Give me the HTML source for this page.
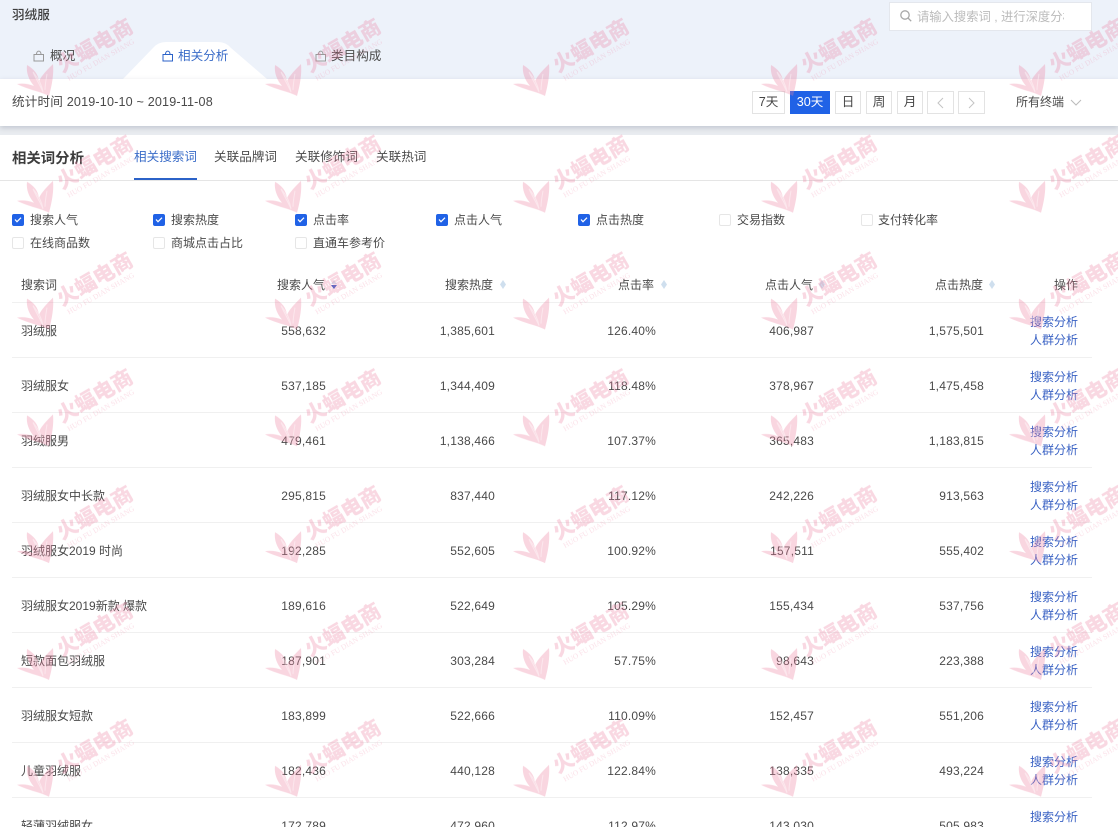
<!DOCTYPE html>
<html lang="zh-CN"><head><meta charset="utf-8"><title>相关词分析</title>
<style>
*{box-sizing:border-box}
html,body{margin:0;padding:0;width:1118px;height:827px;overflow:hidden;background:#fff}
#wrap{position:relative;width:1118px;height:827px;overflow:hidden;background:#fff;font:12px/16px "Liberation Sans","Noto Sans CJK SC",sans-serif;color:#444}
.a{position:absolute;white-space:nowrap}
.btn{position:absolute;top:91px;height:23px;border:1px solid #e3e3e3;background:#fff;text-align:center;line-height:21px;color:#444;font-size:12.600px}
.cb{position:absolute;width:12px;height:12px;border:1px solid #e6e6e6;border-radius:2px;background:#fff}
.cb.on{background:#2062e6;border-color:#2062e6}
.cb.on svg{position:absolute;left:0;top:0}
.lb{position:absolute;white-space:nowrap;color:#4a4a4a}
.row{position:absolute;left:12px;width:1080px;height:55px;border-bottom:1px solid #f0f0f0}
.row span{position:absolute;top:20px;white-space:nowrap;color:#4a4a4a;letter-spacing:.2px}
.row .n{left:9px;letter-spacing:0}
.row .c1,.row .c2,.row .c3,.row .c4,.row .c5{text-align:right;width:100px}
.c1{left:214px}.c2{left:383px}.c3{left:544px}.c4{left:702px}.c5{left:872px}
.row .o1,.row .o2{left:1018px;color:#3a62c4;letter-spacing:0}
.row .o1{top:11px}.row .o2{top:29px}
.th{position:absolute;top:277px;white-space:nowrap;color:#4a4a4a}
.s{position:absolute;top:280px}
.t{position:absolute;white-space:nowrap;font-size:12.600px}
</style></head><body><div id="wrap">
<div class="a" style="left:0;top:0;width:1118px;height:79px;background:#edf2fa"></div>
<div class="a" style="left:12px;top:7px;color:#3d3d3d;font-size:12.600px;font-weight:500">羽绒服</div>
<div class="a" style="left:889px;top:2px;width:203px;height:29px;background:#fff;border:1px solid #e4e7ed"></div>
<svg class="a" style="left:899px;top:9px" width="14" height="14" viewBox="0 0 14 14" fill="none" stroke="#a8a8a8" stroke-width="1.3"><circle cx="6" cy="6" r="4.2"/><path d="M9 9l3.2 3.2"/></svg>
<div class="a" style="left:917px;top:9px;width:147px;overflow:hidden;color:#bbb;font-size:12.300px">请输入搜索词 , 进行深度分析</div>

<svg class="a" style="left:120px;top:40px" width="150" height="40"><path d="M3 39 L33 8 Q38 2 46 2 L98 2 Q106 2 111 8 L147 39 Z" fill="#fff"/></svg>
<svg class="a" style="left:33px;top:50px" width="12" height="12" fill="none" stroke="#999" stroke-width="1"><path d="M1 4.500h9.500v6.500h-9.500zM3.500 4.500C3.500 0 8 0 8 4.500"/></svg>
<div class="t" style="left:50px;top:48px;color:#4a4a4a">概况</div>
<svg class="a" style="left:162px;top:50px" width="12" height="12" fill="none" stroke="#2b62c8" stroke-width="1"><path d="M1 4.500h9.500v6.500h-9.500zM3.500 4.500C3.500 0 8 0 8 4.500"/></svg>
<div class="t" style="left:178px;top:48px;color:#3a6cc8">相关分析</div>
<svg class="a" style="left:315px;top:50px" width="12" height="12" fill="none" stroke="#999" stroke-width="1"><path d="M1 4.500h9.500v6.500h-9.500zM3.500 4.500C3.500 0 8 0 8 4.500"/></svg>
<div class="t" style="left:331px;top:48px;color:#4a4a4a">类目构成</div>

<div class="a" style="left:0;top:126px;width:1118px;height:9px;background:#e9ecf0"></div>
<div class="a" style="left:0;top:79px;width:1118px;height:47px;background:#fff;box-shadow:0 2px 5px rgba(120,130,150,.35)"></div>
<div class="a" style="left:0;top:135px;width:1118px;height:692px;background:#fff"></div>
<div class="t" style="left:12px;top:94px;color:#4a4a4a;letter-spacing:.17px">统计时间 2019-10-10 ~ 2019-11-08</div>
<div class="btn" style="left:752px;width:33px">7天</div>
<div class="btn" style="left:790px;width:40px;background:#2062e6;border-color:#2062e6;color:#fff">30天</div>
<div class="btn" style="left:835px;width:26px">日</div>
<div class="btn" style="left:866px;width:26px">周</div>
<div class="btn" style="left:897px;width:26px">月</div>
<div class="btn" style="left:927px;width:27px"></div>
<div class="btn" style="left:958px;width:27px"></div>
<svg class="a" style="left:936px;top:97px" width="10" height="12" fill="none" stroke="#c4c4c4" stroke-width="1"><path d="M7 1L2 6l5 5"/></svg>
<svg class="a" style="left:967px;top:97px" width="10" height="12" fill="none" stroke="#c4c4c4" stroke-width="1"><path d="M2 1l5 5-5 5"/></svg>
<div class="a" style="left:1016px;top:94px;color:#4a4a4a">所有终端</div>
<svg class="a" style="left:1070px;top:99px" width="12" height="8" fill="none" stroke="#bbb" stroke-width="1"><path d="M1 1l5 5 5-5"/></svg>

<div class="a" style="left:12px;top:151px;font-size:14.400px;font-weight:700;color:#3d3d3d">相关词分析</div>
<div class="t" style="left:134px;top:149px;color:#3a6cc8">相关搜索词</div>
<div class="t" style="left:214px;top:149px;color:#4a4a4a">关联品牌词</div>
<div class="t" style="left:295px;top:149px;color:#4a4a4a">关联修饰词</div>
<div class="t" style="left:376px;top:149px;color:#4a4a4a">关联热词</div>
<div class="a" style="left:0;top:180px;width:1118px;height:1px;background:#e5e5e5"></div>
<div class="a" style="left:134px;top:178px;width:63px;height:2px;background:#2b62c8"></div>

<div class="cb on" style="left:12px;top:214px"><svg width="10" height="10" fill="none" stroke="#fff" stroke-width="1.200"><path d="M2 4.500l2 2.200 4-4"/></svg></div><div class="lb" style="left:30px;top:212px">搜索人气</div>
<div class="cb on" style="left:153px;top:214px"><svg width="10" height="10" fill="none" stroke="#fff" stroke-width="1.200"><path d="M2 4.500l2 2.200 4-4"/></svg></div><div class="lb" style="left:171px;top:212px">搜索热度</div>
<div class="cb on" style="left:295px;top:214px"><svg width="10" height="10" fill="none" stroke="#fff" stroke-width="1.200"><path d="M2 4.500l2 2.200 4-4"/></svg></div><div class="lb" style="left:313px;top:212px">点击率</div>
<div class="cb on" style="left:436px;top:214px"><svg width="10" height="10" fill="none" stroke="#fff" stroke-width="1.200"><path d="M2 4.500l2 2.200 4-4"/></svg></div><div class="lb" style="left:454px;top:212px">点击人气</div>
<div class="cb on" style="left:578px;top:214px"><svg width="10" height="10" fill="none" stroke="#fff" stroke-width="1.200"><path d="M2 4.500l2 2.200 4-4"/></svg></div><div class="lb" style="left:596px;top:212px">点击热度</div>
<div class="cb" style="left:719px;top:214px"></div><div class="lb" style="left:737px;top:212px">交易指数</div>
<div class="cb" style="left:861px;top:214px"></div><div class="lb" style="left:878px;top:212px">支付转化率</div>
<div class="cb" style="left:12px;top:237px"></div><div class="lb" style="left:30px;top:235px">在线商品数</div>
<div class="cb" style="left:153px;top:237px"></div><div class="lb" style="left:171px;top:235px">商城点击占比</div>
<div class="cb" style="left:295px;top:237px"></div><div class="lb" style="left:313px;top:235px">直通车参考价</div>

<div class="th" style="left:21px">搜索词</div>
<div class="th" style="left:277px">搜索人气</div>
<div class="th" style="left:445px">搜索热度</div>
<div class="th" style="left:618px">点击率</div>
<div class="th" style="left:765px">点击人气</div>
<div class="th" style="left:935px">点击热度</div>
<div class="th" style="left:1054px">操作</div>
<svg class="s" style="left:330px" width="8" height="10"><path d="M4 0L7 4H1z" fill="#d5e2ef"/><path d="M4 9L7 5H1z" fill="#3a5fc8"/></svg>
<svg class="s" style="left:499px" width="8" height="10"><path d="M4 0L7 4.500 4 9 1 4.500z" fill="#cfdfee"/></svg>
<svg class="s" style="left:660px" width="8" height="10"><path d="M4 0L7 4.500 4 9 1 4.500z" fill="#cfdfee"/></svg>
<svg class="s" style="left:818px" width="8" height="10"><path d="M4 0L7 4.500 4 9 1 4.500z" fill="#cfdfee"/></svg>
<svg class="s" style="left:988px" width="8" height="10"><path d="M4 0L7 4.500 4 9 1 4.500z" fill="#cfdfee"/></svg>
<div class="a" style="left:12px;top:302px;width:1080px;height:1px;background:#f0f0f0"></div>

<div class="row" style="top:303px"><span class="n">羽绒服</span><span class="c1">558,632</span><span class="c2">1,385,601</span><span class="c3">126.40%</span><span class="c4">406,987</span><span class="c5">1,575,501</span><span class="o1">搜索分析</span><span class="o2">人群分析</span></div>
<div class="row" style="top:358px"><span class="n">羽绒服女</span><span class="c1">537,185</span><span class="c2">1,344,409</span><span class="c3">118.48%</span><span class="c4">378,967</span><span class="c5">1,475,458</span><span class="o1">搜索分析</span><span class="o2">人群分析</span></div>
<div class="row" style="top:413px"><span class="n">羽绒服男</span><span class="c1">479,461</span><span class="c2">1,138,466</span><span class="c3">107.37%</span><span class="c4">365,483</span><span class="c5">1,183,815</span><span class="o1">搜索分析</span><span class="o2">人群分析</span></div>
<div class="row" style="top:468px"><span class="n">羽绒服女中长款</span><span class="c1">295,815</span><span class="c2">837,440</span><span class="c3">117.12%</span><span class="c4">242,226</span><span class="c5">913,563</span><span class="o1">搜索分析</span><span class="o2">人群分析</span></div>
<div class="row" style="top:523px"><span class="n">羽绒服女2019 时尚</span><span class="c1">192,285</span><span class="c2">552,605</span><span class="c3">100.92%</span><span class="c4">157,511</span><span class="c5">555,402</span><span class="o1">搜索分析</span><span class="o2">人群分析</span></div>
<div class="row" style="top:578px"><span class="n">羽绒服女2019新款 爆款</span><span class="c1">189,616</span><span class="c2">522,649</span><span class="c3">105.29%</span><span class="c4">155,434</span><span class="c5">537,756</span><span class="o1">搜索分析</span><span class="o2">人群分析</span></div>
<div class="row" style="top:633px"><span class="n">短款面包羽绒服</span><span class="c1">187,901</span><span class="c2">303,284</span><span class="c3">57.75%</span><span class="c4">98,643</span><span class="c5">223,388</span><span class="o1">搜索分析</span><span class="o2">人群分析</span></div>
<div class="row" style="top:688px"><span class="n">羽绒服女短款</span><span class="c1">183,899</span><span class="c2">522,666</span><span class="c3">110.09%</span><span class="c4">152,457</span><span class="c5">551,206</span><span class="o1">搜索分析</span><span class="o2">人群分析</span></div>
<div class="row" style="top:743px"><span class="n">儿童羽绒服</span><span class="c1">182,436</span><span class="c2">440,128</span><span class="c3">122.84%</span><span class="c4">138,335</span><span class="c5">493,224</span><span class="o1">搜索分析</span><span class="o2">人群分析</span></div>
<div class="row" style="top:798px"><span class="n">轻薄羽绒服女</span><span class="c1">172,789</span><span class="c2">472,960</span><span class="c3">112.97%</span><span class="c4">143,030</span><span class="c5">505,983</span><span class="o1">搜索分析</span><span class="o2">人群分析</span></div>

<svg class="a" style="left:0;top:0;pointer-events:none" width="1118" height="827">
<defs><pattern id="wm" patternUnits="userSpaceOnUse" width="248" height="116.800">
<path d="M27 65C34 69 38 74 39 81C42 75 47 70 53 64C54 74 52 85 49 96C42 92 29 90 17 84C23 83 29 84 34 86C29 80 26 73 27 65Z" fill="#ee7f9f" fill-opacity=".32"/>
<path d="M33 72C38 78 42 85 43 92C40 85 36 79 33 72ZM47 74C46 80 45 85 45 90" fill="none" stroke="#fff" stroke-opacity=".4" stroke-width="1"/>
<g transform="translate(62 73) rotate(-30)">
<text x="0" y="0" font-family="'Noto Sans CJK SC',sans-serif" font-weight="900" font-size="21" fill="#ee7f9f" fill-opacity=".3">火蝠电商</text>
</g>
<g transform="translate(69 81) rotate(-30)">
<text x="0" y="0" font-family="'Liberation Serif',serif" font-size="7.500" fill="#ee7f9f" fill-opacity=".24">HUO FU DIAN SHANG</text>
</g>
</pattern></defs>
<rect width="1118" height="827" fill="url(#wm)"/>
</svg>
</div></body></html>
